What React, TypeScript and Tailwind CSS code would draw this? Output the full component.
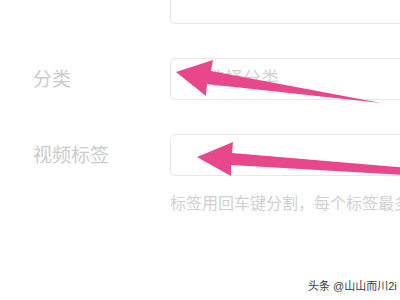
const font = {
  fontFamily: '"Liberation Sans", "Noto Sans CJK SC", sans-serif',
};

function FormRow({
  label,
  placeholder,
}: {
  label?: string;
  placeholder?: string;
}) {
  return (
    <div className="flex items-center">
      <div className="w-[137px] shrink-0 text-[19px] leading-none text-[#cbcbcb]">
        {label}
      </div>
      <div className="flex h-[42px] w-[260px] shrink-0 items-center rounded-[5px] border border-[#e8e8e8] bg-white pl-[18px] text-[18px] text-[#d2d2d2]">
        {placeholder}
      </div>
    </div>
  );
}

function Arrows() {
  return (
    <svg
      className="pointer-events-none absolute inset-0"
      width="400"
      height="300"
      viewBox="0 0 400 300"
    >
      <polygon
        fill="#e8478b"
        points="176,72 213,60 211,71 381,103 207,84 206,96"
      />
      <polygon
        fill="#e8478b"
        points="197,157 233,142 232,153 420,169 420,176 231,165 231,176"
      />
    </svg>
  );
}

export default function App() {
  return (
    <div
      className="relative h-[300px] w-[400px] overflow-hidden bg-white"
      style={font}
    >
      <div className="-mt-[18px] flex flex-col gap-[34px] pl-[33px]">
        <FormRow />
        <FormRow label="分类" placeholder="请选择分类" />
        <FormRow label="视频标签" />
      </div>
      <p className="mt-[17px] whitespace-nowrap pl-[170px] text-[16px] leading-[22px] text-[#d0d0d0]">
        标签用回车键分割，每个标签最多可输入15个字
      </p>
      <Arrows />
      <span className="absolute left-[308px] top-[279px] text-[11px] leading-[14px] text-[#3a3a3a]">
        头条 @山山而川2i
      </span>
    </div>
  );
}
